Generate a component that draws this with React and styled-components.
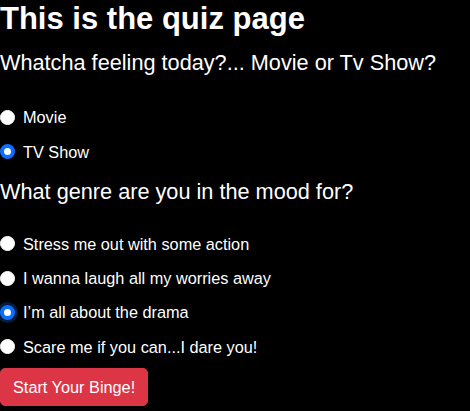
import React, { useState } from 'react'
import styled, { createGlobalStyle } from 'styled-components'

const GlobalStyle = createGlobalStyle`
  html, body {
    margin: 0;
    background: #000;
    color: #fff;
    font-family: "Liberation Sans", Arial, sans-serif;
  }
`

const Page = styled.div`
  display: flex;
  flex-direction: column;
  align-items: flex-start;
  min-height: 100vh;
  background: #000;
`

const Title = styled.h1`
  font-size: 31px;
  font-weight: 600;
  line-height: 1.2;
  margin: 0 0 13px;
`

const Question = styled.h3`
  font-size: 21.7px;
  font-weight: 400;
  line-height: 1.2;
  margin: 0 0 ${(props) => props.$gap}px;
`

const Group = styled.div`
  display: flex;
  flex-direction: column;
  gap: 14.4px;
  margin-bottom: ${(props) => props.$after}px;
`

const Option = styled.label`
  display: flex;
  align-items: center;
  gap: 8px;
  font-size: 16.3px;
  line-height: 20px;
  cursor: pointer;
`

const Radio = styled.input.attrs({ type: 'radio' })`
  appearance: none;
  width: 15px;
  height: 15px;
  margin: 0;
  border-radius: 50%;
  background: #fff;
  border: 1px solid #fff;
  flex: none;

  &:checked {
    background: #fff;
    border: 4px solid #0d6efd;
  }
  &:focus {
    outline: none;
    box-shadow: 0 0 0 3px rgba(13, 110, 253, 0.25);
  }
`

const Button = styled.button`
  font-family: inherit;
  font-size: 16.3px;
  line-height: 24px;
  white-space: nowrap;
  color: #fff;
  background: #dc3545;
  border: 1px solid #dc3545;
  border-radius: 5px;
  padding: 6px 12px;
  cursor: pointer;
`

const App = () => {
  const [kind, setKind] = useState('tv')
  const [genre, setGenre] = useState('drama')

  const genres = [
    ['action', 'Stress me out with some action'],
    ['comedy', 'I wanna laugh all my worries away'],
    ['drama', 'I\u2019m all about the drama'],
    ['horror', 'Scare me if you can...I dare you!'],
  ]

  return (
    <Page>
      <GlobalStyle />
      <Title>This is the quiz page</Title>
      <Question $gap={31}>Whatcha feeling today?... Movie or Tv Show?</Question>
      <Group $after={17}>
        <Option>
          <Radio name="kind" checked={kind === 'movie'} onChange={() => setKind('movie')} />
          Movie
        </Option>
        <Option>
          <Radio name="kind" checked={kind === 'tv'} onChange={() => setKind('tv')} />
          TV Show
        </Option>
      </Group>
      <Question $gap={29}>What genre are you in the mood for?</Question>
      <Group $after={11}>
        {genres.map(([key, text]) => (
          <Option key={key}>
            <Radio
              name="genre"
              checked={genre === key}
              onChange={() => setGenre(key)}
              style={key === 'drama' ? { boxShadow: '0 0 0 3px rgba(13,110,253,0.25)' } : undefined}
            />
            {text}
          </Option>
        ))}
      </Group>
      <Button>Start Your Binge!</Button>
    </Page>
  )
}

export default App
